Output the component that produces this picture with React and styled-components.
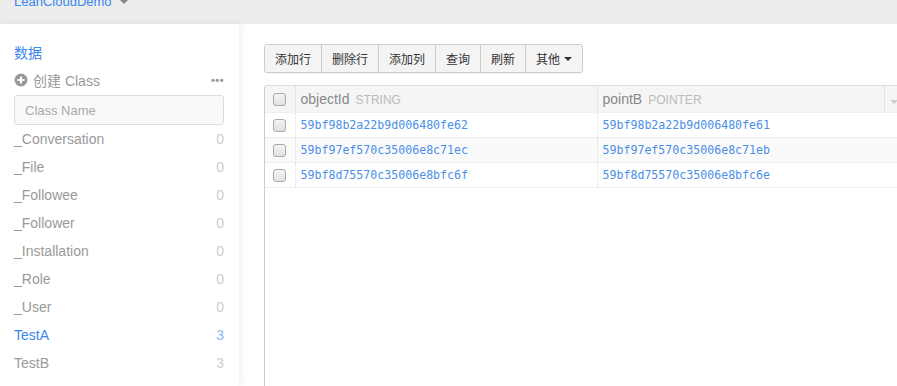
import React from 'react';
import styled, { createGlobalStyle } from 'styled-components';

const GlobalStyle = createGlobalStyle`
    html, body {
        margin: 0;
        padding: 0;
        background: #fff;
        font-family: "Liberation Sans", Arial, "Noto Sans CJK SC", sans-serif;
    }
`;

const Page = styled.div`
    width: 897px;
    height: 386px;
    display: flex;
    flex-direction: column;
    overflow: hidden;
`;

const TopBar = styled.div`
    height: 24px;
    flex: none;
    background: #ededed;
    overflow: hidden;
    padding-left: 14px;
`;

const Brand = styled.div`
    display: flex;
    align-items: center;
    gap: 8px;
    margin-top: -8px;
    font-size: 13px;
    line-height: 20px;
    color: #3b87f0;
`;

const Caret = styled.span`
    display: inline-block;
    width: 0;
    height: 0;
    border-left: 4px solid transparent;
    border-right: 4px solid transparent;
    border-top: 4px solid ${(p) => p.color || '#888'};
`;

const Body = styled.div`
    flex: 1;
    display: flex;
    min-height: 0;
`;

const Sidebar = styled.div`
    width: 239px;
    flex: none;
    box-sizing: border-box;
    padding: 19px 15px 0 14px;
    background: #fff;
    box-shadow: 2px 0 7px rgba(0, 0, 0, 0.07);
    position: relative;
    z-index: 1;
`;

const SectionTitle = styled.div`
    font-size: 14px;
    line-height: 20px;
    color: #3b87f0;
`;

const CreateRow = styled.div`
    display: flex;
    align-items: center;
    justify-content: space-between;
    margin-top: 7px;
    height: 20px;
    font-size: 14px;
    color: #999;
`;

const CreateLabel = styled.span`
    display: flex;
    align-items: center;
    gap: 5px;
`;

const More = styled.span`
    font-size: 11px;
    letter-spacing: 0.5px;
    color: #999;
    font-weight: bold;
`;

const SearchInput = styled.input`
    display: block;
    box-sizing: border-box;
    width: 210px;
    height: 30px;
    margin-top: 5px;
    padding: 0 10px;
    border: 1px solid #ddd;
    border-radius: 3px;
    background: #f9f9f9;
    font-family: inherit;
    font-size: 13px;
    color: #555;
    outline: none;

    &::placeholder {
        color: #aaa;
    }
`;

const ClassList = styled.div`
    display: flex;
    flex-direction: column;
`;

const ClassItem = styled.div`
    display: flex;
    justify-content: space-between;
    align-items: center;
    height: 28px;
    font-size: 14px;
    color: ${(p) => (p.active ? '#3b87f0' : '#9a9a9a')};
`;

const Count = styled.span`
    color: ${(p) => (p.active ? '#8ab6f2' : '#ccc')};
    font-size: 14px;
`;

const Main = styled.div`
    flex: 1;
    min-width: 0;
    padding: 20px 0 0 25px;
    display: flex;
    flex-direction: column;
    gap: 12px;
    overflow: hidden;
`;

const Toolbar = styled.div`
    display: flex;
    align-self: flex-start;
    height: 29px;
    box-sizing: border-box;
    border: 1px solid #ccc;
    border-radius: 3px;
    overflow: hidden;
    box-shadow: 0 1px 1px rgba(0, 0, 0, 0.04);
`;

const ToolButton = styled.button`
    display: flex;
    align-items: center;
    gap: 4px;
    height: 100%;
    padding: 0 10px;
    border: none;
    border-left: ${(p) => (p.first ? 'none' : '1px solid #ccc')};
    background: #f4f4f4;
    font-family: inherit;
    font-size: 12px;
    color: #333;
    cursor: pointer;
`;

const TableWrap = styled.div`
    flex: 1;
    border-left: 1px solid #ccc;
    border-top: 1px solid #ddd;
    border-top-left-radius: 3px;
    width: 700px;
`;

const Table = styled.table`
    border-collapse: collapse;
    table-layout: fixed;
    width: 700px;
`;

const HeadCell = styled.th`
    height: 26px;
    padding: 0 5px;
    background: #f5f5f5;
    border-bottom: 1px solid #eee;
    border-left: ${(p) => (p.divider ? '1px solid #e3e3e3' : 'none')};
    text-align: left;
    font-weight: normal;
    font-size: 14px;
    color: #888;
    white-space: nowrap;
    vertical-align: middle;
`;

const TypeTag = styled.span`
    font-size: 12px;
    color: #bbb;
    margin-left: 6px;
`;

const Row = styled.tr`
    background: ${(p) => (p.striped ? '#fafafa' : '#fff')};
`;

const Cell = styled.td`
    height: 24px;
    padding: 0 5px;
    border-bottom: 1px solid #eee;
    border-left: ${(p) => (p.divider ? '1px dotted #ddd' : 'none')};
    font-family: "DejaVu Sans Mono", "Liberation Mono", monospace;
    font-size: 11.6px;
    color: #4a8fe6;
    white-space: nowrap;
    vertical-align: middle;
`;

const CheckCell = styled.td`
    padding: 0;
    text-align: center;
    vertical-align: middle;
    border-bottom: 1px solid #eee;
    background: ${(p) => (p.head ? '#f5f5f5' : 'transparent')};
`;

const Check = styled.span`
    display: inline-block;
    box-sizing: border-box;
    width: 13px;
    height: 13px;
    margin-top: 4px;
    border: 1px solid #a9a9a9;
    border-radius: 3px;
    background: linear-gradient(#f4f4f4, #e2e2e2);
`;

const PlusIcon = () => (
    <svg width="14" height="14" viewBox="0 0 14 14">
        <circle cx="7" cy="7" r="6.5" fill="#999" />
        <rect x="3.5" y="6" width="7" height="2" fill="#fff" />
        <rect x="6" y="3.5" width="2" height="7" fill="#fff" />
    </svg>
);

const classes = [
    { name: '_Conversation', count: 0 },
    { name: '_File', count: 0 },
    { name: '_Followee', count: 0 },
    { name: '_Follower', count: 0 },
    { name: '_Installation', count: 0 },
    { name: '_Role', count: 0 },
    { name: '_User', count: 0 },
    { name: 'TestA', count: 3, active: true },
    { name: 'TestB', count: 3 },
];

const rows = [
    ['59bf98b2a22b9d006480fe62', '59bf98b2a22b9d006480fe61'],
    ['59bf97ef570c35006e8c71ec', '59bf97ef570c35006e8c71eb'],
    ['59bf8d75570c35006e8bfc6f', '59bf8d75570c35006e8bfc6e'],
];

const tools = ['添加行', '删除行', '添加列', '查询', '刷新'];

const App = () => {
    return (
        <Page>
            <GlobalStyle />
            <TopBar>
                <Brand>
                    LeanCloudDemo
                    <Caret color="#888" />
                </Brand>
            </TopBar>
            <Body>
                <Sidebar>
                    <SectionTitle>数据</SectionTitle>
                    <CreateRow>
                        <CreateLabel>
                            <PlusIcon />
                            创建 Class
                        </CreateLabel>
                        <More>•••</More>
                    </CreateRow>
                    <SearchInput placeholder="Class Name" />
                    <ClassList>
                        {classes.map((c) => (
                            <ClassItem key={c.name} active={c.active}>
                                {c.name}
                                <Count active={c.active}>{c.count}</Count>
                            </ClassItem>
                        ))}
                    </ClassList>
                </Sidebar>
                <Main>
                    <Toolbar>
                        {tools.map((t, i) => (
                            <ToolButton key={t} first={i === 0}>{t}</ToolButton>
                        ))}
                        <ToolButton>
                            其他
                            <Caret color="#333" />
                        </ToolButton>
                    </Toolbar>
                    <TableWrap>
                        <Table>
                            <colgroup>
                                <col style={{ width: 30 }} />
                                <col style={{ width: 302 }} />
                                <col style={{ width: 287 }} />
                                <col style={{ width: 81 }} />
                            </colgroup>
                            <thead>
                                <tr>
                                    <CheckCell head><Check /></CheckCell>
                                    <HeadCell divider>
                                        objectId<TypeTag>STRING</TypeTag>
                                    </HeadCell>
                                    <HeadCell divider>
                                        pointB<TypeTag>POINTER</TypeTag>
                                    </HeadCell>
                                    <HeadCell divider>
                                        <Caret color="#ccc" />
                                    </HeadCell>
                                </tr>
                            </thead>
                            <tbody>
                                {rows.map((r, i) => (
                                    <Row key={r[0]} striped={i % 2 === 1}>
                                        <CheckCell><Check /></CheckCell>
                                        <Cell divider>{r[0]}</Cell>
                                        <Cell divider>{r[1]}</Cell>
                                        <Cell />
                                    </Row>
                                ))}
                            </tbody>
                        </Table>
                    </TableWrap>
                </Main>
            </Body>
        </Page>
    );
};

export default App;
